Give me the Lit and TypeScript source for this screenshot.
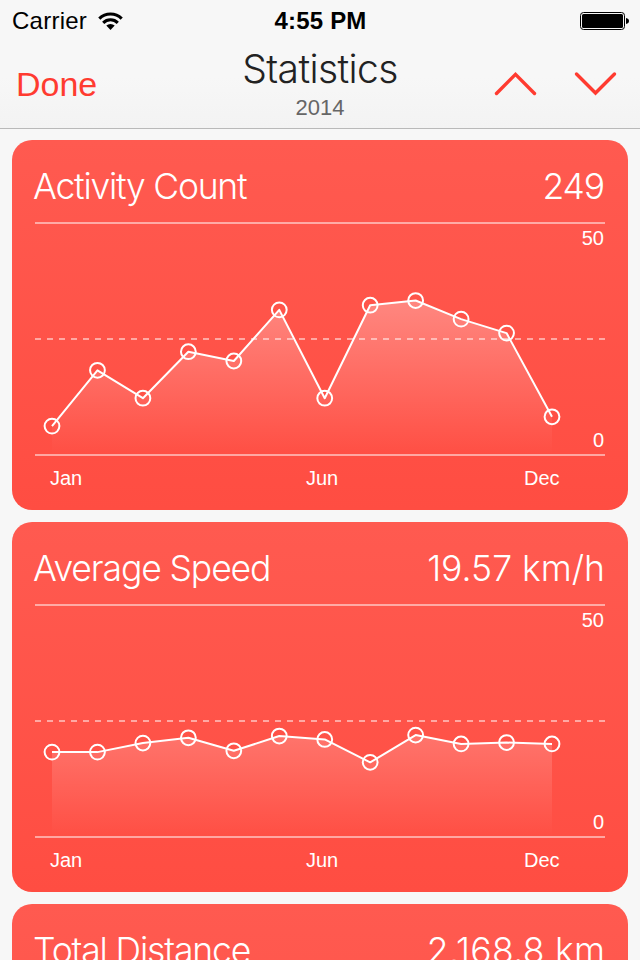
import { LitElement, html, css, svg } from "lit";
import { customElement, property } from "lit/decorators.js";

const CHART_W = 616;
const CHART_H = 234;
const BASELINE = 232;
const UNIT = 4.65;
const FIRST_X = 40;
const STEP_X = 500 / 11;

@customElement("stat-card")
export class StatCard extends LitElement {
  @property() label = "";
  @property() total = "";
  @property({ type: Number }) spacing = 0;
  @property({ type: Number }) totalSpacing = 0;
  @property({ attribute: false }) values: number[] = [];

  static styles = css`
    :host {
      display: block;
      height: 370px;
      border-radius: 20px;
      background: linear-gradient(#ff5a50, #ff4d42);
      color: #fff;
      overflow: hidden;
      flex: none;
    }
    .head {
      display: flex;
      justify-content: space-between;
      align-items: center;
      height: 82px;
      padding: 12px 23px 0 21px;
      box-sizing: border-box;
      font: 300 35.5px/44px Inter, sans-serif;
      white-space: nowrap;
    }
    .plot {
      display: grid;
      height: 234px;
    }
    .plot > * {
      grid-area: 1 / 1;
    }
    .chart {
      display: block;
    }
    .scale {
      display: flex;
      flex-direction: column;
      justify-content: space-between;
      align-items: flex-end;
      padding: 5px 24px 5px 0;
      font-size: 20px;
      line-height: 22px;
    }
    .axis {
      display: grid;
      grid-template-columns: 256px 218px auto;
      padding: 10px 0 0 38px;
      font-size: 20px;
      line-height: 24px;
    }
    .rule {
      fill: #fff;
      fill-opacity: 0.5;
    }
    .dash {
      stroke: #fff;
      stroke-opacity: 0.5;
      stroke-width: 2;
      stroke-dasharray: 6 6;
    }
    .line,
    .dot {
      fill: none;
      stroke: #fff;
      stroke-width: 2;
      stroke-linejoin: round;
    }
  `;

  render() {
    const pts = this.values.map((v, i) => [FIRST_X + i * STEP_X, BASELINE - v * UNIT]);
    const line = pts.map(([x, y]) => `${x.toFixed(2)},${y.toFixed(2)}`).join(" ");
    const area = `${FIRST_X},${BASELINE} ${line} ${FIRST_X + 500},${BASELINE}`;
    return html`
      <div class="head">
        <span style="letter-spacing:${this.spacing}px">${this.label}</span>
        <span style="letter-spacing:${this.totalSpacing}px;margin-right:${-this.totalSpacing}px">${this.total}</span>
      </div>
      ${this.values.length
        ? html`<div class="plot">
              <svg class="chart" width=${CHART_W} height=${CHART_H} viewBox="0 0 ${CHART_W} ${CHART_H}">
                <defs>
                  <linearGradient id="fade" gradientUnits="userSpaceOnUse" x1="0" y1="0" x2="0" y2=${BASELINE}>
                    <stop offset="0" stop-color="#fff" stop-opacity="0.45" />
                    <stop offset="1" stop-color="#fff" stop-opacity="0" />
                  </linearGradient>
                </defs>
                <rect class="rule" x="23" y="0" width="570" height="2" />
                <rect class="rule" x="23" y="232" width="570" height="2" />
                <line class="dash" x1="23" y1="117" x2="593" y2="117" />
                <polygon points=${area} fill="url(#fade)" />
                <polyline class="line" points=${line} />
                ${pts.map(([x, y]) => svg`<circle class="dot" cx=${x} cy=${y} r="7.4" />`)}
              </svg>
              <div class="scale"><span>50</span><span>0</span></div>
            </div>
            <div class="axis"><span>Jan</span><span>Jun</span><span>Dec</span></div>`
        : null}
    `;
  }
}

@customElement("app-root")
export class AppRoot extends LitElement {
  static styles = css`
    :host {
      display: flex;
      flex-direction: column;
      width: 640px;
      height: 960px;
      overflow: hidden;
      background: #f7f7f7;
      font-family: "Liberation Sans", Arial, sans-serif;
    }
    .top {
      flex: none;
      height: 129px;
      box-sizing: border-box;
      border-bottom: 1px solid #b9b9b9;
      background: linear-gradient(#f7f7f7 60%, #f3f3f3);
    }
    .status {
      display: grid;
      grid-template-columns: 1fr auto 1fr;
      align-items: center;
      height: 40px;
      box-sizing: border-box;
      padding: 2px 11px 0 12px;
      font-size: 24px;
      line-height: 28px;
      color: #000;
    }
    .carrier {
      display: flex;
      align-items: center;
      gap: 11px;
      letter-spacing: 0.25px;
    }
    .clock {
      font-weight: 700;
      font-size: 24px;
      letter-spacing: 0.2px;
    }
    .battery {
      justify-self: end;
    }
    .nav {
      display: grid;
      grid-template-columns: 1fr auto 1fr;
      height: 88px;
      padding: 0 23px;
    }
    .done {
      color: #ff3b30;
      font-size: 34px;
      line-height: 40px;
      padding-top: 24px;
      margin-left: -7px;
    }
    .title {
      display: flex;
      flex-direction: column;
      align-items: center;
      width: 200px;
    }
    .name {
      font: 300 39px/46px Inter, sans-serif;
      letter-spacing: -0.6px;
      color: #222;
      padding-top: 6px;
    }
    .year {
      font-size: 22px;
      line-height: 26px;
      color: #666;
      margin-top: 3px;
    }
    .arrows {
      display: flex;
      justify-content: flex-end;
      gap: 37px;
      padding-top: 30px;
    }
    .chevron {
      fill: none;
      stroke: #ff3b30;
      stroke-width: 3.4;
      stroke-linecap: round;
    }
    .list {
      display: flex;
      flex-direction: column;
      gap: 12px;
      padding: 11px 12px 0;
    }
  `;

  render() {
    return html`
      <header class="top">
        <div class="status">
          <div class="carrier">
            <span>Carrier</span>
            <svg width="25" height="19" viewBox="0 0 25 19">
              <g fill="none" stroke="#000" stroke-width="3.1">
                <path d="M1.3 6.6A16 16 0 0 1 23.7 6.6" />
                <path d="M5.2 10.8A10.4 10.4 0 0 1 19.8 10.8" />
              </g>
              <path d="M8.3 13.6A6 6 0 0 1 16.7 13.6L12.5 18Z" />
            </svg>
          </div>
          <span class="clock">4:55 PM</span>
          <svg class="battery" width="49" height="20" viewBox="0 0 49 20">
            <rect x="0.5" y="1.5" width="44" height="17" rx="3" fill="none" stroke="#000" />
            <rect x="2" y="3" width="41" height="14" rx="1.5" />
            <path d="M46 7C48 7.300 49 8.500 49 10S48 12.700 46 13Z" />
          </svg>
        </div>
        <div class="nav">
          <span class="done">Done</span>
          <div class="title">
            <span class="name">Statistics</span>
            <span class="year">2014</span>
          </div>
          <div class="arrows">
            <svg width="43" height="26" viewBox="0 0 43 26"><path class="chevron" d="M2.500 23.500L21.500 4.400L40.500 23.500" /></svg>
            <svg width="43" height="26" viewBox="0 0 43 26"><path class="chevron" d="M2.500 4L21.500 23L40.500 4" /></svg>
          </div>
        </div>
      </header>
      <main class="list">
        <stat-card label="Activity Count" total="249" spacing="-1.25" .totalSpacing=${-1.2}
          .values=${[6, 18, 12, 22, 20, 31, 12, 32, 33, 29, 26, 8]}></stat-card>
        <stat-card label="Average Speed" total="19.57 km/h" spacing="-1.1" .totalSpacing=${0}
          .values=${[18.04, 18.04, 19.98, 21.12, 18.32, 21.5, 20.76, 15.84, 21.7, 19.8, 20.1, 19.8]}></stat-card>
        <stat-card label="Total Distance" total="2,168.8 km" spacing="-1.15" .totalSpacing=${0.3}></stat-card>
      </main>
    `;
  }
}
